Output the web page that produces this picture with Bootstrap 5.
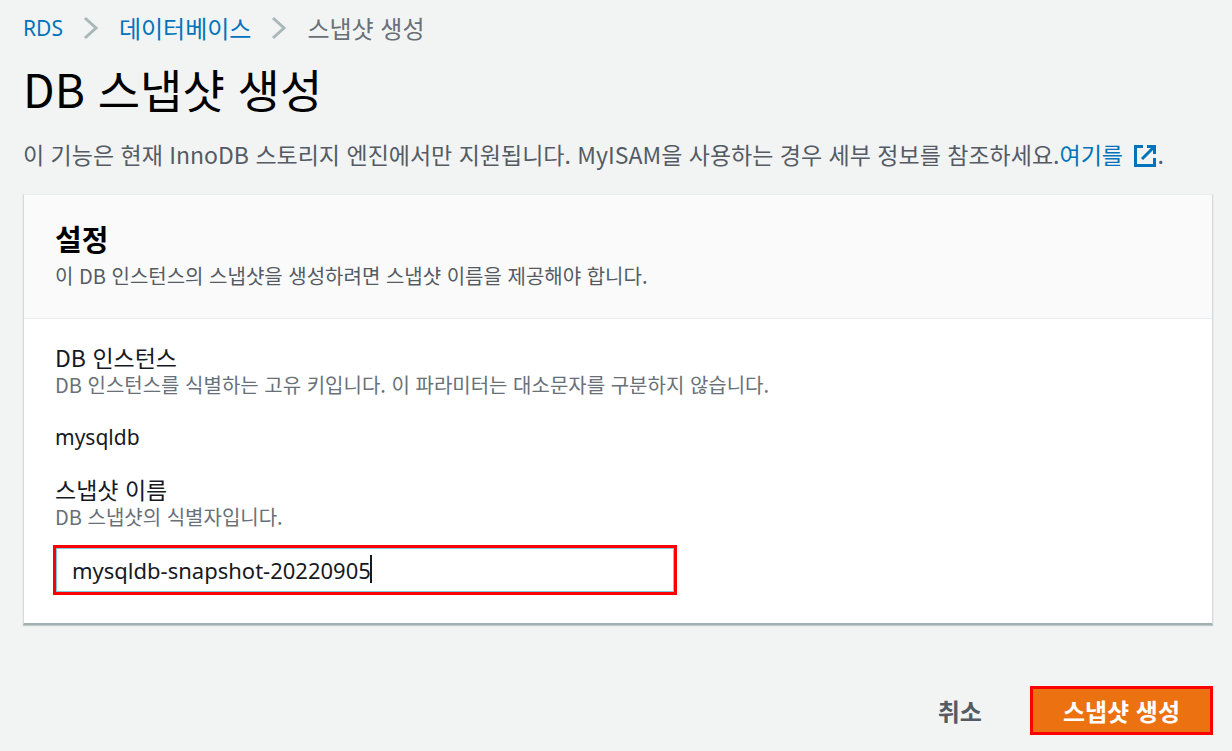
<!DOCTYPE html>
<html lang="ko">
<head>
<meta charset="utf-8">
<meta name="viewport" content="width=device-width, initial-scale=1">
<title>DB 스냅샷 생성</title>
<link href="https://cdn.jsdelivr.net/npm/bootstrap@5.3.0/dist/css/bootstrap.min.css" rel="stylesheet">
<style>
body{background:#f2f4f4;color:#16191f;font-family:"Noto Sans CJK KR",sans-serif;font-size:23px;line-height:28px}
a{color:#0073bb;text-decoration:none}
.page{padding:14px 19px 14px 23px}
.crumbs{gap:20px;font-size:24px}
.crumbs svg{width:16px;height:26px;fill:none;stroke:#aab7b8;stroke-width:3}
.crumb-now{color:#687078}
.page-title{font-size:46px;line-height:56px;font-weight:400;color:#000;margin:18px 0 22px}
.intro{color:#545b64;font-size:23px;line-height:32px}
.ext-icon{width:24px;height:24px;fill:none;stroke:#0073bb;stroke-width:3;vertical-align:-4px}
.panel{background:#fff;border:1px solid #d5dbdb;border-top-color:#eaeded;border-bottom:2px solid #a3b0b1;box-shadow:0 1px 1px rgba(0,28,36,.2)}
.panel-head{background:#fafafa;border-bottom:1px solid #eaeded;padding:27px 31px 28px}
.panel-head h2{font-size:29px;line-height:32px;font-weight:700;color:#000}
.hint{font-size:20px;line-height:28px;color:#687078}
.head-hint{color:#545b64}
.panel-body{padding:24px 31px 28px}
.latin{font-family:"Noto Sans",sans-serif;font-size:21px}
.field-wrap{width:55.4%;margin:14px 0 0 -2px}
.name-field{height:50px;border:3px solid #f00;border-radius:0;outline:0;box-shadow:inset 0 0 0 1px #7fcbdc;color:#16191f;font-size:22px;padding:0 16px}
.caret{left:317px;top:10px;width:2px;height:28px;background:#16191f}
.actions{gap:16px;margin-top:61px}
.actions .btn{height:49px;border-radius:0;font-weight:700;font-size:24px;line-height:28px}
.actions .cancel{color:#545b64;border:0;padding:0 32px}
.actions .create{background:#ec7211;border:3px solid #f00;color:#fff;padding:0 30px}
</style>
</head>
<body>
<main class="page">
<nav class="d-flex align-items-center crumbs" aria-label="breadcrumb">
  <a class="latin" href="#">RDS</a>
  <svg viewBox="0 0 16 26" aria-hidden="true"><path d="M2 3l11 10L2 23"/></svg>
  <a href="#">데이터베이스</a>
  <svg viewBox="0 0 16 26" aria-hidden="true"><path d="M2 3l11 10L2 23"/></svg>
  <span class="crumb-now">스냅샷 생성</span>
</nav>
<h1 class="page-title">DB 스냅샷 생성</h1>
<p class="intro mb-4">이 기능은 현재 InnoDB 스토리지 엔진에서만 지원됩니다. MyISAM을 사용하는 경우 세부 정보를 참조하세요.<a href="#">여기를 <svg class="ext-icon ms-1" viewBox="0 0 24 24" aria-hidden="true"><path d="M10 2.500H2.500V21.500H21.500V14M9 15L21 3M14 2.500H21.500V10"/></svg></a>.</p>
<section class="panel">
  <div class="panel-head">
    <h2 class="mb-2">설정</h2>
    <div class="hint head-hint">이 DB 인스턴스의 스냅샷을 생성하려면 스냅샷 이름을 제공해야 합니다.</div>
  </div>
  <div class="panel-body">
    <div>DB 인스턴스</div>
    <div class="hint">DB 인스턴스를 식별하는 고유 키입니다. 이 파라미터는 대소문자를 구분하지 않습니다.</div>
    <div class="latin my-4">mysqldb</div>
    <label class="d-block" for="snapshot-name">스냅샷 이름</label>
    <div class="hint" id="name-help">DB 스냅샷의 식별자입니다.</div>
    <div class="field-wrap position-relative">
      <input id="snapshot-name" type="text" class="form-control latin name-field" aria-describedby="name-help" value="mysqldb-snapshot-20220905">
      <span class="caret position-absolute" aria-hidden="true"></span>
    </div>
  </div>
</section>
<div class="d-flex justify-content-end actions">
  <button type="button" class="btn cancel">취소</button>
  <button type="button" class="btn create">스냅샷 생성</button>
</div>
</main>
<script src="https://cdn.jsdelivr.net/npm/bootstrap@5.3.0/dist/js/bootstrap.bundle.min.js"></script>
</body>
</html>
